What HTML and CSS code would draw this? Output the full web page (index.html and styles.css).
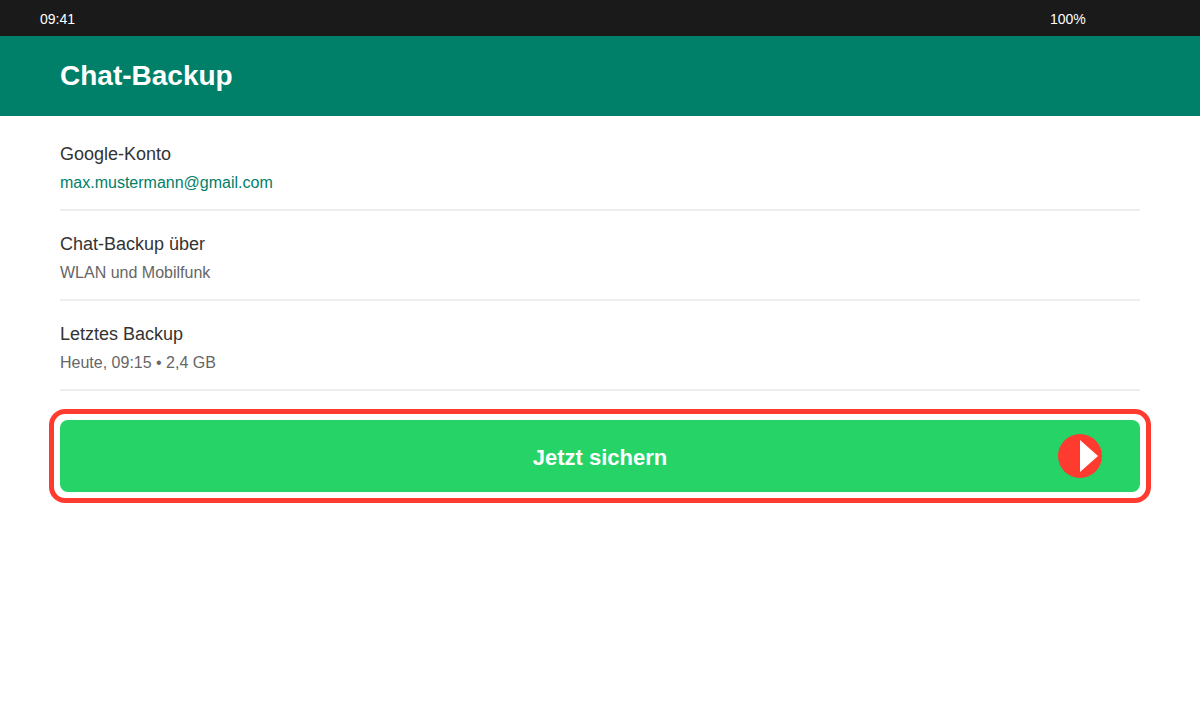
FILE: index.html
```html
<!DOCTYPE html>
<html lang="de">

<head>
    <meta charset="UTF-8">
    <meta name="viewport" content="width=device-width, initial-scale=1.0">
    <title>Chat-Backup</title>
    <link rel="stylesheet" href="styles.css">
</head>

<body>
    <div class="status-bar">
        <span>09:41</span>
        <span class="battery">100%</span>
    </div>

    <header class="header">
        <h1>Chat-Backup</h1>
    </header>

    <main class="content">
        <section class="setting">
            <h2>Google-Konto</h2>
            <p class="account">max.mustermann@gmail.com</p>
        </section>
        <section class="setting">
            <h2>Chat-Backup über</h2>
            <p>WLAN und Mobilfunk</p>
        </section>
        <section class="setting">
            <h2>Letztes Backup</h2>
            <p>Heute, 09:15 • 2,4 GB</p>
        </section>

        <div class="highlight">
            <button type="button" class="backup-button">
                <span>Jetzt sichern</span>
                <svg class="pointer" width="44" height="44" viewBox="0 0 44 44" aria-hidden="true">
                    <circle cx="22" cy="22" r="22" fill="#ff3b30" />
                    <path d="M22 6 L40 22 L22 38 Z" fill="#fff" />
                </svg>
            </button>
        </div>
    </main>
</body>

</html>
```
FILE: styles.css
```css
* {
    box-sizing: border-box;
}

body {
    font-family: Helvetica, "Liberation Sans", Arial, sans-serif;
    margin: 0;
    background-color: #fff;
}

h1,
h2,
p {
    margin: 0;
}

.status-bar {
    display: flex;
    justify-content: space-between;
    padding: 10px 40px 8px;
    background-color: #1a1a1a;
    color: #fff;
    font-size: 14px;
    line-height: 18px;
}

.battery {
    min-width: 110px;
}

.header {
    padding: 20px 60px;
    background-color: #008069;
    color: #fff;
}

h1 {
    font-size: 28px;
    line-height: 40px;
}

.content {
    padding: 5px 49px;
}

.setting {
    margin: 0 11px;
    padding: 20px 0 14px;
    border-bottom: 2px solid #eee;
}

.setting h2 {
    color: #333;
    font-size: 18px;
    font-weight: normal;
    line-height: 26px;
}

.setting p {
    margin-top: 4px;
    color: #666;
    font-size: 16px;
    line-height: 24px;
}

.setting .account {
    color: #008069;
}

.highlight {
    margin-top: 18px;
    padding: 6px;
    border: 5px solid #ff3b30;
    border-radius: 16px;
}

.backup-button {
    position: relative;
    display: block;
    width: 100%;
    padding: 22px 20px 18px;
    border: none;
    border-radius: 8px;
    background-color: #25d366;
    color: #fff;
    font-family: inherit;
    font-size: 22px;
    font-weight: bold;
    line-height: 32px;
    cursor: pointer;
}

/* Marker on top of the button */
.pointer {
    position: absolute;
    top: 14px;
    right: 38px;
}
```
